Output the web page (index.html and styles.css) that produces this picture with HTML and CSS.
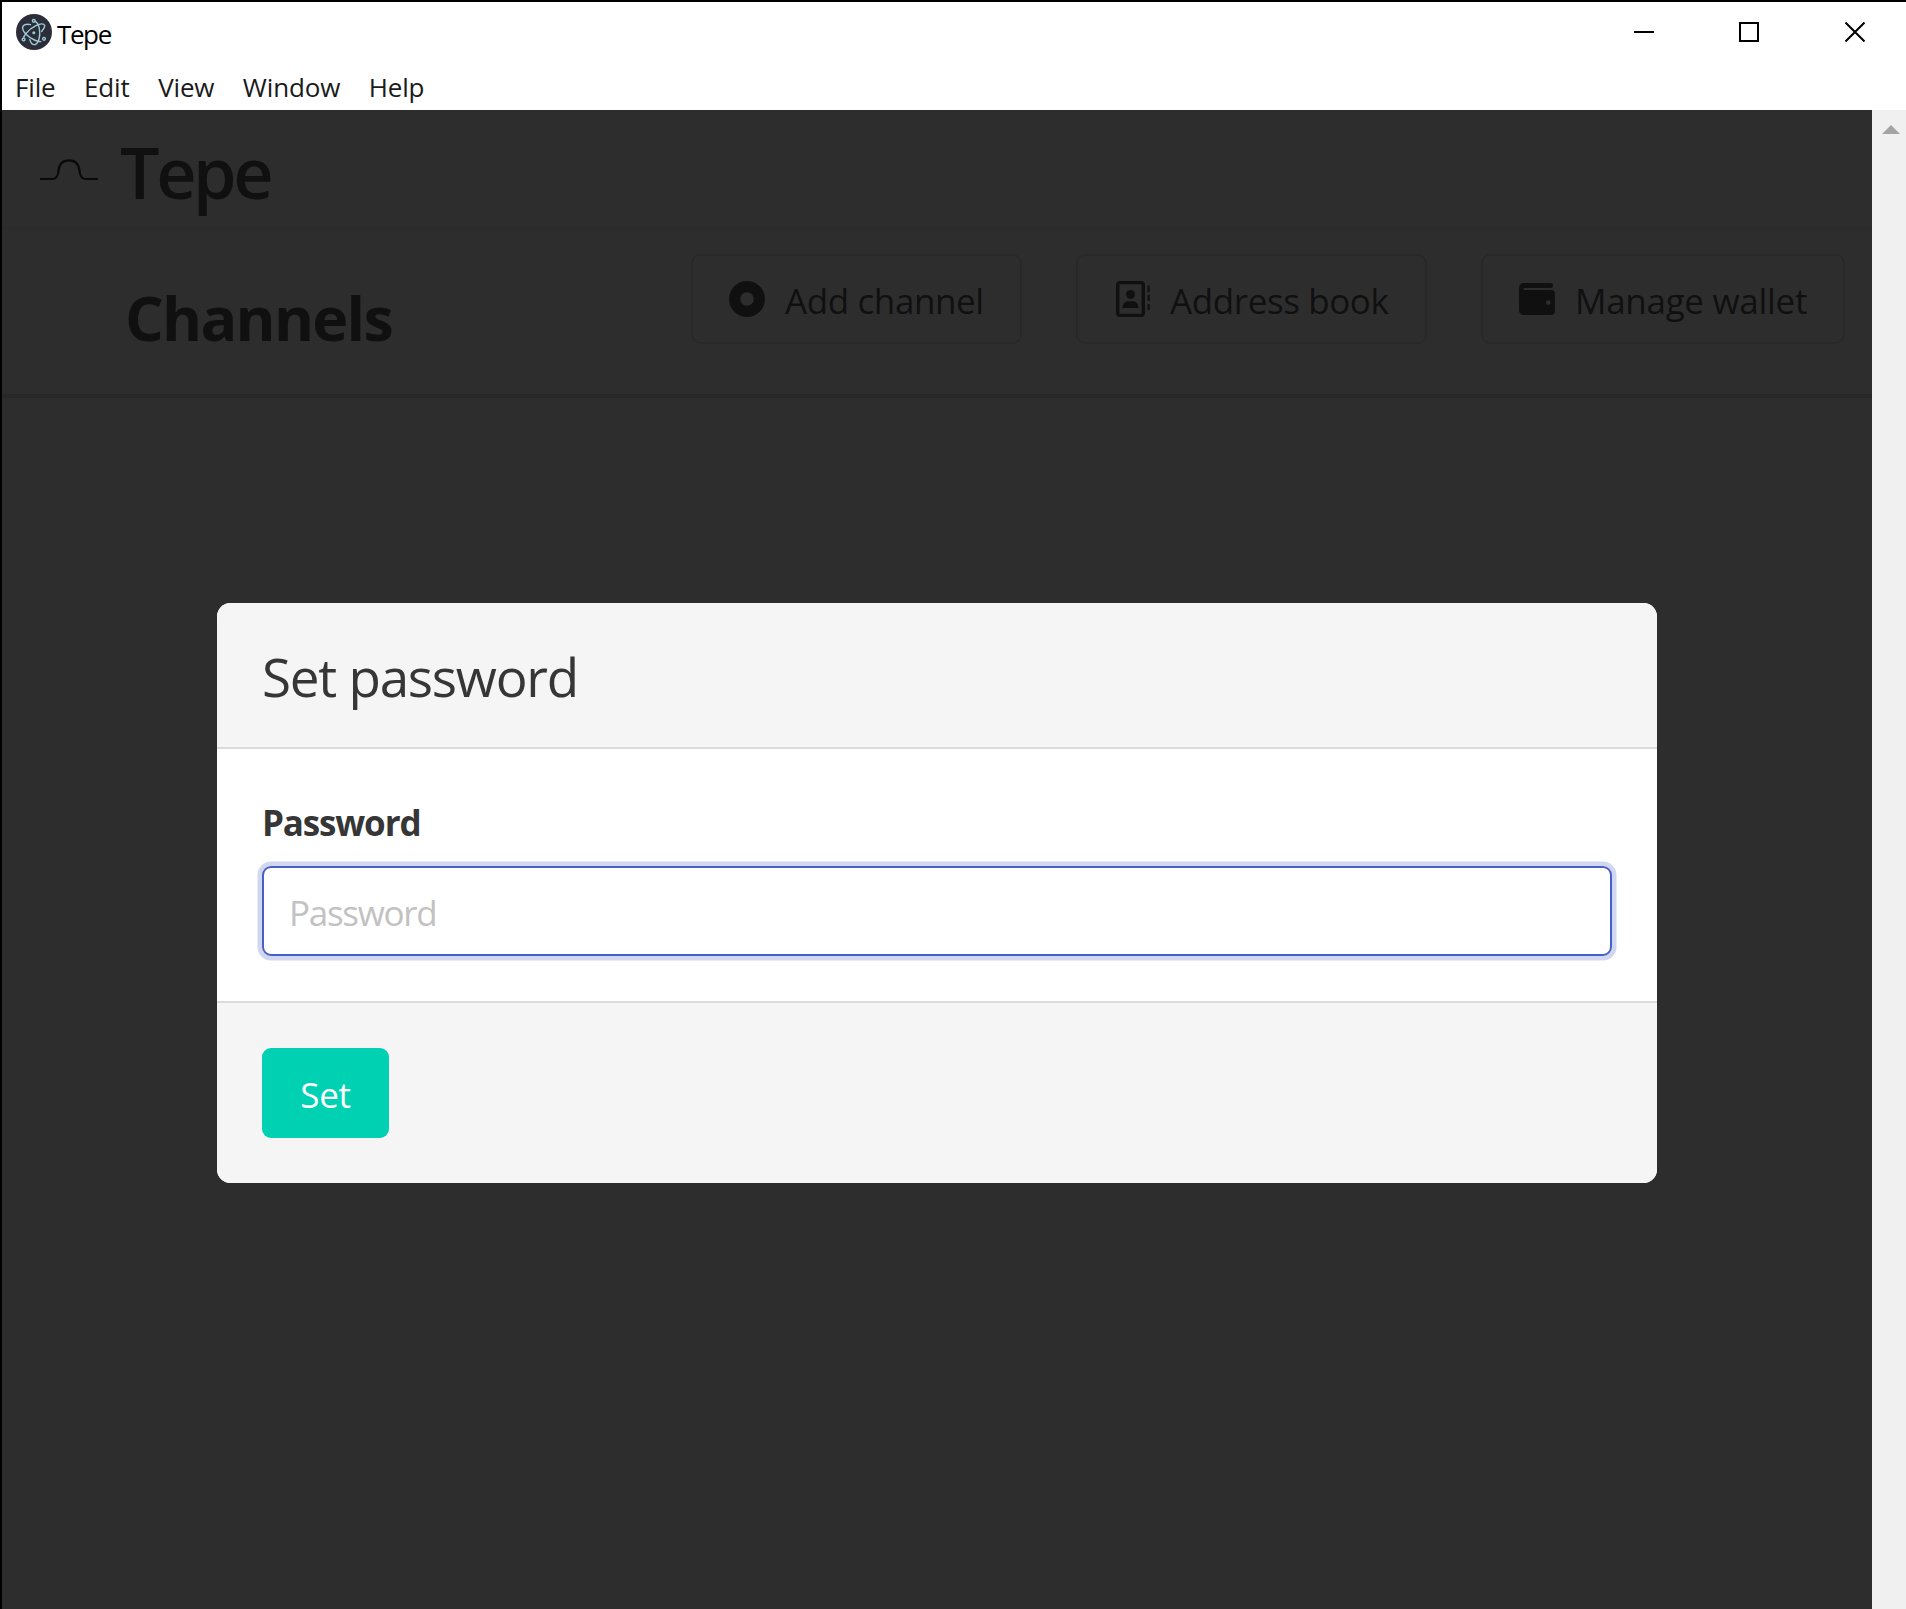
FILE: index.html
```html
<!DOCTYPE html>
<html lang="en">
<head>
<meta charset="utf-8">
<title>Tepe</title>
<link rel="stylesheet" href="styles.css">
</head>
<body>
<div class="window">
  <header class="titlebar">
    <svg class="app-icon" viewBox="0 0 36 36">
      <circle cx="18" cy="18" r="18" fill="#2b2e3a"/>
      <g fill="none" stroke="#9fc9d3" stroke-width="1.4" stroke-linecap="round">
        <path d="M14.5 10.6C9.500 9.700 6.300 11 6.600 14.500C7 18 12 23 18.500 26C20.500 27 23 27.600 24.800 27.600"/>
        <path d="M25.600 17.500C28.500 14 29.600 11.500 28 10.500C25 8.500 15.500 12.500 10 19.500C8.500 21.300 7.700 23 7.500 24.200"/>
        <path d="M13.800 25.600C14.800 29.200 17 31 19.200 30.500C22.500 29.500 24.500 22.500 23.500 15.500C23 11.500 21.300 8.500 19.400 7.300"/>
        <circle cx="17.800" cy="6.800" r="1.400"/><circle cx="7.600" cy="25.500" r="1.400"/><circle cx="28" cy="24.800" r="1.400"/>
      </g>
      <circle cx="17.800" cy="18.800" r="1.500" fill="#9fc9d3"/>
    </svg>
    <span class="window-title">Tepe</span>
    <div class="window-controls">
      <svg viewBox="0 0 20 20"><path d="M0 10H20"/></svg>
      <svg viewBox="0 0 20 20"><path d="M1 1H19V19H1Z"/></svg>
      <svg viewBox="0 0 20 20"><path d="M.5 .5L19.500 19.500M19.500 .5L.5 19.500"/></svg>
    </div>
  </header>
  <nav class="menubar">
    <span>File</span><span>Edit</span><span>View</span><span>Window</span><span>Help</span>
  </nav>
  <div class="viewport">
    <main class="page">
      <div class="brand">
        <svg class="brand-mark" viewBox="0 0 60 24"><path d="M0 21H12Q17.500 21 18.300 14Q19 2.300 29 2.300T39.700 14Q40.500 21 46 21H58"/></svg>
        <h1 class="brand-name">Tepe</h1>
      </div>
      <div class="toolbar">
        <h2 class="heading">Channels</h2>
        <div class="actions">
          <button class="button add">
            <svg class="icon" viewBox="0 0 16 16"><path d="M16 8A8 8 0 1 1 0 8a8 8 0 0 1 16 0zM8 5a3 3 0 1 0 0 6 3 3 0 0 0 0-6z"/></svg>
            <span>Add channel</span>
          </button>
          <button class="button book">
            <svg class="icon" viewBox="0 0 36 36"><path fill-rule="evenodd" d="M6 0H27A4 4 0 0 1 31 4V32A4 4 0 0 1 27 36H6A4 4 0 0 1 2 32V4A4 4 0 0 1 6 0ZM5.500 3.300V32.700H27.500V3.300Z"/><circle cx="16.500" cy="13.500" r="4.500"/><path d="M8.500 27C8.500 22.500 11.500 20.300 14 20.300H19C22 20.300 24.500 22.500 24.500 27ZM33.500 4.500H35.700V11H33.500ZM33.500 13.800H35.700V20H33.500ZM33.500 23H35.700V29H33.500Z"/></svg>
            <span>Address book</span>
          </button>
          <button class="button wallet">
            <svg class="icon" viewBox="0 0 36 36"><path fill-rule="evenodd" d="M4.500 2H31.500A2.300 2.300 0 0 1 31.500 7H5.500A1 1 0 0 0 5.500 9H32A4 4 0 0 1 36 13V30A4 4 0 0 1 32 34H4.500A4.500 4.500 0 0 1 0 29.500V6.500A4.500 4.500 0 0 1 4.500 2ZM29.300 19.300A2.300 2.300 0 1 0 29.300 23.900A2.300 2.300 0 1 0 29.300 19.300Z"/></svg>
            <span>Manage wallet</span>
          </button>
        </div>
      </div>
    </main>
    <div class="scrollbar"><svg viewBox="0 0 18 9"><path d="M0 9L9 0L18 9Z"/></svg></div>
    <div class="backdrop">
      <section class="modal">
        <header class="modal-head"><p class="modal-title">Set password</p></header>
        <div class="modal-body">
          <div class="label">Password</div>
          <div class="input">Password</div>
        </div>
        <footer class="modal-foot"><button class="submit">Set</button></footer>
      </section>
    </div>
  </div>
</div>
</body>
</html>
```
FILE: styles.css
```css
* { box-sizing: border-box; }
body { margin: 0; font-family: "Open Sans", "Noto Sans", sans-serif; color: #363636; }
h1, h2, p { margin: 0; }
button { font: inherit; color: inherit; margin: 0; }
.window { width: 1906px; height: 1609px; overflow: hidden; display: flex; flex-direction: column; background: #fff; border: solid #000; border-width: 2px 0 0 2px; }
.titlebar { height: 62px; display: flex; padding: 12px 30px 0 14px; color: #000; }
.app-icon { width: 36px; height: 36px; }
.window-title { font-size: 26px; line-height: 36px; margin: 2px 0 0 5px; letter-spacing: -1.4px; }
.window-controls { margin: 8px 11px 0 auto; display: flex; gap: 85px; }
.window-controls svg { width: 20px; height: 20px; fill: none; stroke: #000; stroke-width: 2; }
.window-controls svg:last-child { margin-left: 1px; }
.menubar { height: 46px; display: flex; padding-left: 13px; font-size: 26px; line-height: 46px; letter-spacing: -.15px; color: #1a1a1a; gap: 28.5px; }
.viewport { position: relative; flex: 1; display: flex; }
.page { flex: 1; background: #fff; }
.scrollbar { width: 34px; background: #f0f0f0; padding: 15px 0 0 10px; }
.scrollbar svg { display: block; width: 18px; height: 9px; fill: #a3a3a3; }
.brand { height: 117px; display: flex; padding-left: 38px; box-shadow: 0 4px 0 #f8f8f8; }
.brand-mark { width: 60px; height: 24px; margin-top: 48px; fill: none; stroke: #000; stroke-width: 2.2; }
.brand-name { font-size: 70px; line-height: 90px; font-weight: 600; letter-spacing: -3.4px; margin: 17px 0 0 20px; }
.toolbar { height: 171px; display: flex; justify-content: space-between; padding: 27px 27px 0 123px; border-bottom: 4px solid #dbdbdb; }
.heading { font-size: 61px; line-height: 80px; font-weight: 700; letter-spacing: -1.75px; margin-top: 24px; }
.actions { display: flex; gap: 54px; }
.button { height: 90px; display: flex; align-items: center; border: 2px solid #dbdbdb; border-radius: 9px; background: #fff; padding: 0 0 0 36px; font-size: 35px; line-height: 54px; letter-spacing: -.4px; white-space: nowrap; }
.button span { padding-top: 4px; }
.button .icon { width: 36px; height: 36px; flex: none; margin-right: 20px; fill: #363636; }
.add { width: 331px; }
.book { width: 351px; }
.wallet { width: 364px; letter-spacing: -.3px; }
.backdrop { position: absolute; inset: 0 34px 0 0; background: rgba(10,10,10,.86); padding-top: 493px; }
.modal { width: 1440px; margin: 0 auto; border-radius: 13.5px; overflow: hidden; background: #fff; }
.modal-head { height: 146px; background: #f5f5f5; border-bottom: 2px solid #dbdbdb; padding: 47px 45px 0; }
.modal-title { font-size: 53px; line-height: 54px; letter-spacing: -1.25px; }
.modal-body { height: 252px; padding: 45px; }
.label { font-size: 35px; font-weight: 700; line-height: 54px; letter-spacing: -1.15px; height: 72px; padding-top: 2px; }
.input { height: 90px; border: 2px solid #485fc7; border-radius: 9px; box-shadow: 0 0 0 4.5px rgba(72,95,199,.25); padding: 0 25px; font-size: 35px; line-height: 90px; letter-spacing: -1.3px; color: #c2c2c2; }
.modal-foot { height: 182px; background: #f5f5f5; border-top: 2px solid #dbdbdb; padding: 45px; }
.submit { display: block; width: 127px; height: 90px; border: 0; padding: 4px 0 0; border-radius: 9px; background: #00d1b2; color: #fff; font-size: 35px; line-height: 86px; letter-spacing: -.3px; }
```
